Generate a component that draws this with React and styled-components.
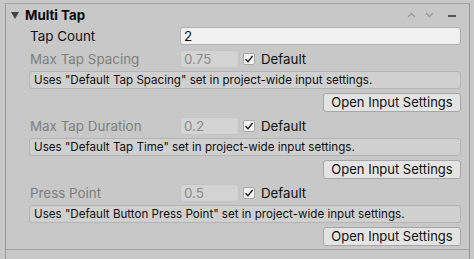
import React from 'react';
import styled, {createGlobalStyle} from 'styled-components';

const Global = createGlobalStyle`
  html, body {
    margin: 0;
    background: #c8c8c8;
    font-family: Inter, "Noto Sans", sans-serif;
  }
`

const Frame = styled.div`
  width: 474px;
  height: 259px;
  box-sizing: border-box;
  padding-top: 3px;
  overflow: hidden;
`

const Panel = styled.div`
  margin-left: 5px;
  width: 465px;
  height: 256px;
  box-sizing: border-box;
  border-top: 1px solid #a0a0a0;
  border-left: 1px solid #999;
  border-right: 1px solid #999;
  display: flex;
  flex-direction: column;
`

const Header = styled.div`
  display: flex;
  align-items: center;
  height: 22px;
  padding-left: 5px;
  padding-right: 12px;
`

const Foldout = styled.span`
  width: 0;
  height: 0;
  border-left: 4px solid transparent;
  border-right: 4px solid transparent;
  border-top: 7px solid #444;
  margin-right: 6px;
`

const Title = styled.span`
  font-weight: 700;
  font-size: 13.3px;
  color: #0a0a0a;
  flex: 1;
`

const HeaderIcons = styled.div`
  display: flex;
  align-items: center;
  gap: 9px;
`

const Body = styled.div`
  padding-left: 23px;
  padding-right: 8px;
  display: flex;
  flex-direction: column;
`

const Row = styled.div`
  display: flex;
  align-items: center;
  height: 18px;
  margin-top: ${p => p.$mt || 0}px;
`

const Label = styled.span`
  width: 150px;
  padding-left: 1px;
  font-size: 13.4px;
  color: ${p => p.$disabled ? '#7f7f7f' : '#111'};
  white-space: nowrap;
`

const Field = styled.div`
  box-sizing: border-box;
  height: 18px;
  width: ${p => p.$width ? p.$width + 'px' : 'auto'};
  flex: ${p => p.$width ? 'none' : 1};
  border-radius: 3px;
  border: 1px solid ${p => p.$disabled ? '#c4c4c4' : '#b0b0b0'};
  background: ${p => p.$disabled ? '#d4d4d4' : '#f0f0f0'};
  color: ${p => p.$disabled ? '#8a8a8a' : '#111'};
  font-size: 13.4px;
  line-height: 16px;
  padding-left: 3px;
`

const Check = styled.span`
  box-sizing: border-box;
  width: 12px;
  height: 12px;
  margin-left: 4px;
  border: 1px solid #a8a8a8;
  border-radius: 2px;
  background: #f2f2f2;
  display: flex;
  align-items: center;
  justify-content: center;
`

const CheckLabel = styled.span`
  margin-left: 6px;
  font-size: 13.3px;
  color: #111;
`

const Help = styled.div`
  box-sizing: border-box;
  height: 18px;
  margin-top: 3px;
  border: 1px solid #b4b4b4;
  border-radius: 3px;
  background: #d0d0d0;
  font-size: 11.6px;
  line-height: 16px;
  padding-left: 4px;
  color: #111;
  white-space: nowrap;
`

const ButtonRow = styled.div`
  display: flex;
  justify-content: flex-end;
  margin-top: 4px;
`

const Button = styled.div`
  box-sizing: border-box;
  height: 19px;
  width: 138px;
  border: 1px solid #a6a6a6;
  border-radius: 3px;
  background: #e4e4e4;
  font-size: 13px;
  line-height: 17px;
  text-align: center;
  color: #111;
`

const Footer = styled.div`
  margin-top: 3px;
  border-top: 1px solid #a4a4a4;
`

const Tick = () => (
  <svg width="10" height="10" viewBox="0 0 10 10">
    <path d="M1.5 5.2 L4 7.8 L8.6 2" fill="none" stroke="#222" strokeWidth="1.4"/>
  </svg>
)

const Icons = () => (
  <HeaderIcons>
    <svg width="9" height="6" viewBox="0 0 9 6"><path d="M1 5 L4.5 1.5 L8 5" fill="none" stroke="#9a9a9a" strokeWidth="1.3"/></svg>
    <svg width="9" height="6" viewBox="0 0 9 6"><path d="M1 1 L4.5 4.5 L8 1" fill="none" stroke="#9a9a9a" strokeWidth="1.3"/></svg>
    <svg width="10" height="6" viewBox="0 0 10 6" style={{marginLeft: 4}}><rect x="1" y="3" width="8" height="2" fill="#555"/></svg>
  </HeaderIcons>
)

const Setting = ({label, value, help, mt}) => (
  <>
    <Row $mt={mt}>
      <Label $disabled>{label}</Label>
      <Field $disabled $width={59}>{value}</Field>
      <Check><Tick/></Check>
      <CheckLabel>Default</CheckLabel>
    </Row>
    <Help>{help}</Help>
    <ButtonRow><Button>Open Input Settings</Button></ButtonRow>
  </>
)

const App = () => (
  <Frame>
    <Global/>
    <Panel>
      <Header>
        <Foldout/>
        <Title>Multi Tap</Title>
        <Icons/>
      </Header>
      <Body>
        <Row $mt={1}>
          <Label>Tap Count</Label>
          <Field>2</Field>
        </Row>
        <Setting mt={5} label="Max Tap Spacing" value="0.75"
          help={'Uses "Default Tap Spacing" set in project-wide input settings.'}/>
        <Setting mt={5} label="Max Tap Duration" value="0.2"
          help={'Uses "Default Tap Time" set in project-wide input settings.'}/>
        <Setting mt={5} label="Press Point" value="0.5"
          help={'Uses "Default Button Press Point" set in project-wide input settings.'}/>
      </Body>
      <Footer/>
    </Panel>
  </Frame>
);
export default App;
